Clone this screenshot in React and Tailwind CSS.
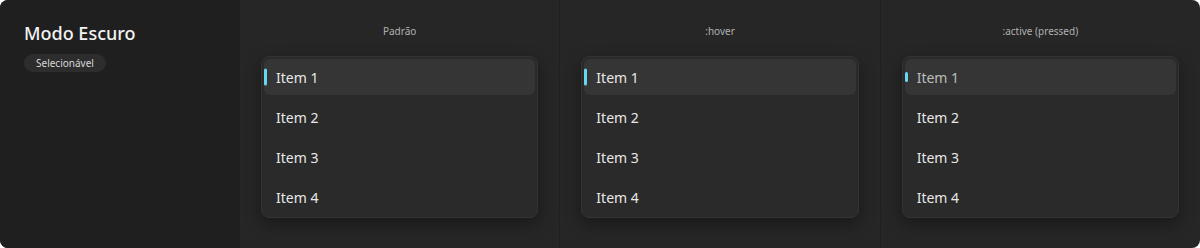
import React from "react";

const states = [
  { label: "Padrão", bar: "h-[17px]", text: "text-[#e8e8e8]" },
  { label: ":hover", bar: "h-[17px]", text: "text-[#e8e8e8]" },
  { label: ":active (pressed)", bar: "h-[10px]", text: "text-[#bdbdbd]" },
];

const items = ["Item 1", "Item 2", "Item 3", "Item 4"];

const ListCard = ({ bar, text }) => (
  <div className="w-full rounded-lg border border-[#333333] bg-[#2a2a2a] p-[2px] shadow-[0_6px_16px_rgba(0,0,0,0.35)]">
    <div className="flex flex-col gap-1">
      {items.map((item, i) => (
        <div
          key={item}
          className={
            "relative flex h-9 items-center rounded-md pl-[12px] text-[14px] " +
            (i === 0 ? "bg-[#353535] " + text : "text-[#e8e8e8]")
          }
        >
          {i === 0 && (
            <span className={"absolute left-0 top-1/2 w-[3px] -translate-y-1/2 rounded-full bg-[#67d7f2] " + bar} />
          )}
          {item}
        </div>
      ))}
    </div>
  </div>
);

export default function App() {
  return (
    <div className="h-[248px] w-[1200px] bg-white" style={{ fontFamily: '"Noto Sans", "Open Sans", sans-serif' }}>
      <div className="flex h-full w-full overflow-hidden rounded-lg bg-[#262626]">
        <div className="flex w-[240px] shrink-0 flex-col items-start bg-[#1f1f1f] pl-6 pt-[20px]">
          <h1 className="text-[18px] font-medium leading-[26px] text-[#f2f2f2]">Modo Escuro</h1>
          <span className="mt-[8px] rounded-full bg-[#2d2d2d] px-[12px] py-[2px] text-[10px] leading-[14px] text-[#d8d8d8]">
            Selecionável
          </span>
        </div>
        {states.map((s, i) => (
          <div
            key={s.label}
            className={"flex flex-1 flex-col items-center px-[21px] pt-[23px] " + (i > 0 ? "border-l border-[#202020]" : "")}
          >
            <div className="h-4 text-[10px] leading-4 text-[#b0b0b0]">{s.label}</div>
            <div className="mt-[17px] w-full">
              <ListCard bar={s.bar} text={s.text} />
            </div>
          </div>
        ))}
      </div>
    </div>
  );
}
